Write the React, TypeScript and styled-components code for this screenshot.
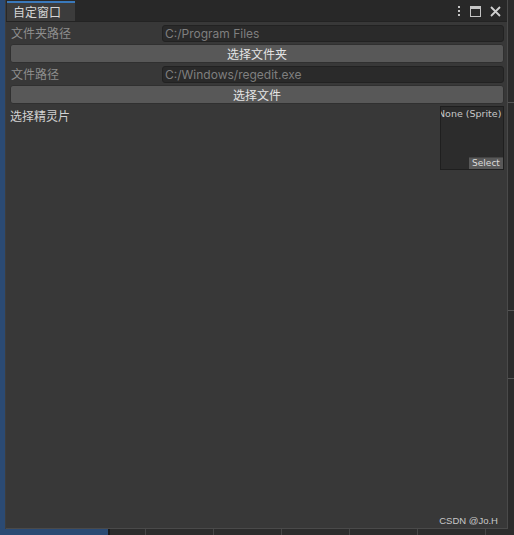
import React from 'react';
import styled, { createGlobalStyle } from 'styled-components';

const GlobalStyle = createGlobalStyle`
  html, body {
    margin: 0;
    padding: 0;
    background: #2c2c2c;
  }
  body {
    font-family: 'Noto Sans CJK SC', 'Noto Sans', sans-serif;
    width: 514px;
    height: 535px;
    overflow: hidden;
  }
`;

const rows = [
  { label: '文件夹路径', value: 'C:/Program Files', button: '选择文件夹' },
  { label: '文件路径', value: 'C:/Windows/regedit.exe', button: '选择文件' },
];

function App() {
  return (
    <>
      <GlobalStyle />
      <Desktop>
        <LeftDock />
        <Window>
          <TitleBar>
            <Tab>自定窗口</Tab>
            <TitleIcons>
              <svg width="4" height="12" viewBox="0 0 4 12">
                <rect x="1" y="1" width="2" height="2" fill="#c4c4c4" />
                <rect x="1" y="5" width="2" height="2" fill="#c4c4c4" />
                <rect x="1" y="9" width="2" height="2" fill="#c4c4c4" />
              </svg>
              <svg width="11" height="11" viewBox="0 0 11 11">
                <rect x="0.5" y="0.5" width="10" height="10" fill="none" stroke="#c4c4c4" />
                <rect x="1" y="1" width="9" height="2" fill="#c4c4c4" />
              </svg>
              <svg width="11" height="11" viewBox="0 0 11 11">
                <path d="M1 1 L10 10 M10 1 L1 10" stroke="#d0d0d0" strokeWidth="1.8" />
              </svg>
            </TitleIcons>
          </TitleBar>
          <Content>
            {rows.map((row) => (
              <React.Fragment key={row.label}>
                <FieldRow>
                  <Label>{row.label}</Label>
                  <TextField>{row.value}</TextField>
                </FieldRow>
                <WideButton>{row.button}</WideButton>
              </React.Fragment>
            ))}
            <SpriteRow>
              <SpriteLabel>选择精灵片</SpriteLabel>
              <SpriteBox>
                <SpriteName>None (Sprite)</SpriteName>
                <SelectButton>Select</SelectButton>
              </SpriteBox>
            </SpriteRow>
            <Watermark>CSDN @Jo.H</Watermark>
          </Content>
        </Window>
        <RightDock>
          <GridLine top={102} />
          <GridLine top={310} />
          <GridLine top={378} />
        </RightDock>
      </Desktop>
      <BottomStrip>
        <BottomBlue />
        <BottomGrid />
      </BottomStrip>
    </>
  );
}

export default App;

const Desktop = styled.div`
  display: flex;
  height: 529px;
`;

const LeftDock = styled.div`
  width: 6px;
  background: #2b4a73;
  border-right: 1px solid #3d3d3d;
  box-sizing: border-box;
`;

const RightDock = styled.div`
  position: relative;
  width: 6px;
  background: #2b2b2b;
`;

const GridLine = styled.div<{ top: number }>`
  position: absolute;
  left: 0;
  right: 0;
  top: ${(p) => p.top}px;
  height: 1px;
  background: #555;
`;

const Window = styled.div`
  width: 502px;
  display: flex;
  flex-direction: column;
  background: #383838;
  border-right: 1px solid #4a4a4a;
  border-bottom: 1px solid #4a4a4a;
  box-sizing: border-box;
`;

const TitleBar = styled.div`
  height: 22px;
  display: flex;
  align-items: flex-end;
  justify-content: space-between;
  background: #282828;
  padding-top: 2px;
  box-sizing: border-box;
  border-bottom: 1px solid #232323;
`;

const Tab = styled.div`
  width: 68px;
  height: 20px;
  margin-left: 1px;
  box-sizing: border-box;
  background: #3c3c3c;
  border-top: 2px solid #3a79bb;
  color: #d6d6d6;
  font-size: 12px;
  line-height: 17px;
  padding-left: 6px;
`;

const TitleIcons = styled.div`
  display: flex;
  align-items: center;
  gap: 9px;
  height: 20px;
  padding-right: 6px;
`;

const Content = styled.div`
  flex: 1;
  display: flex;
  flex-direction: column;
  padding: 2px 3px 0 4px;
  position: relative;
`;

const FieldRow = styled.div`
  display: flex;
  align-items: center;
  height: 18px;
  margin-bottom: 2px;
`;

const Label = styled.div`
  width: 151px;
  padding-left: 1px;
  color: #8d8d8d;
  font-size: 12px;
  line-height: 18px;
`;

const TextField = styled.div`
  flex: 1;
  height: 17px;
  box-sizing: border-box;
  background: #2a2a2a;
  border: 1px solid #222;
  border-radius: 3px;
  color: #7f7f7f;
  font-family: 'Inter', 'Noto Sans', sans-serif;
  font-size: 12px;
  line-height: 15px;
  padding-left: 2px;
`;

const WideButton = styled.div`
  height: 19px;
  box-sizing: border-box;
  background: #585858;
  border: 1px solid #303030;
  border-radius: 3px;
  color: #e4e4e4;
  font-size: 12px;
  line-height: 17px;
  text-align: center;
  margin-bottom: 2px;
`;

const SpriteRow = styled.div`
  display: flex;
  justify-content: space-between;
  align-items: flex-start;
`;

const SpriteLabel = styled.div`
  color: #d2d2d2;
  font-size: 12px;
  line-height: 18px;
  padding-top: 1px;
`;

const SpriteBox = styled.div`
  position: relative;
  width: 64px;
  height: 64px;
  box-sizing: border-box;
  background: #2c2c2c;
  border: 1px solid #1f1f1f;
  overflow: hidden;
`;

const SpriteName = styled.div`
  color: #c8c8c8;
  font-family: 'DejaVu Sans', sans-serif;
  font-size: 9.5px;
  line-height: 14px;
  white-space: nowrap;
  margin-left: -3px;
`;

const SelectButton = styled.div`
  position: absolute;
  right: 0;
  bottom: 0;
  width: 34px;
  height: 11px;
  background: #585858;
  border-top: 1px solid #444;
  color: #dcdcdc;
  font-family: 'DejaVu Sans', sans-serif;
  font-size: 9px;
  line-height: 11px;
  text-align: center;
`;

const Watermark = styled.div`
  position: absolute;
  right: 9px;
  bottom: 2px;
  color: #c8c8c8;
  font-family: 'Liberation Sans', sans-serif;
  font-size: 9.5px;
`;

const BottomStrip = styled.div`
  display: flex;
  height: 6px;
`;

const BottomBlue = styled.div`
  width: 108px;
  background: #2b4a73;
  border-right: 2px solid #1a1a1a;
`;

const BottomGrid = styled.div`
  flex: 1;
  background: #2c2c2c;
  background-image: repeating-linear-gradient(
    90deg,
    transparent 0,
    transparent 35px,
    #464646 35px,
    #464646 36px,
    transparent 36px,
    transparent 68px
  );
`;
